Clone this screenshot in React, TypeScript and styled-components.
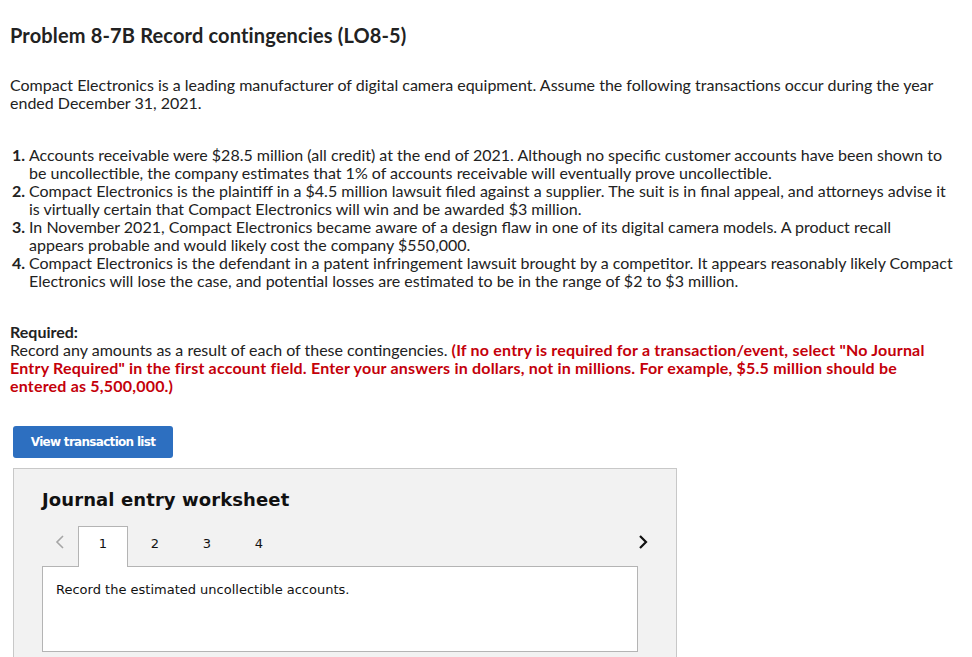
import React from 'react';
import styled, { createGlobalStyle } from 'styled-components';

const GlobalStyle = createGlobalStyle`
  html, body {
    margin: 0;
    padding: 0;
    background: #fff;
  }
  body {
    font-family: 'Lato', 'Liberation Sans', sans-serif;
    color: #222;
  }
`;

const Page = styled.div`
  padding: 22px 0 0 10px;
  width: 943px;
`;

const Title = styled.h1`
  margin: 0;
  font-size: 20px;
  line-height: 26px;
  font-weight: 700;
  letter-spacing: 0.15px;
  color: #222;
`;

const Intro = styled.p`
  margin: 28px 0 0 0;
  font-size: 16px;
  line-height: 18px;
`;

const List = styled.ol`
  margin: 34px 0 0 0;
  padding: 0 0 0 19px;
  font-size: 16px;
  line-height: 18px;
  li::marker {
    font-weight: 700;
  }
`;

const Required = styled.div`
  margin-top: 33px;
  font-size: 16px;
  line-height: 18px;
`;

const Label = styled.div`
  font-weight: 700;
`;

const Warning = styled.strong`
  color: #c4000a;
  letter-spacing: 0.2px;
`;

const ActionButton = styled.button`
  margin: 31px 0 0 3px;
  width: 160px;
  height: 32px;
  border: none;
  border-radius: 3px;
  background: #2d6fc0;
  color: #fff;
  font-family: 'DejaVu Sans', Verdana, sans-serif;
  font-weight: 700;
  font-size: 12px;
  letter-spacing: -0.7px;
  cursor: pointer;
`;

const Worksheet = styled.div`
  margin: 10px 0 0 3px;
  width: 664px;
  height: 200px;
  background: #f2f2f2;
  border: 1px solid #c8c8c8;
  padding: 18px 0 0 28px;
  box-sizing: border-box;
  font-family: 'DejaVu Sans', Verdana, sans-serif;
`;

const WorksheetTitle = styled.h2`
  margin: 0;
  font-size: 18px;
  line-height: 26px;
  font-weight: 700;
  color: #111;
  letter-spacing: 0.1px;
`;

const TabRow = styled.div`
  display: flex;
  align-items: flex-end;
  margin-top: 13px;
  width: 619px;
  height: 40px;
`;

const Arrow = styled.button<{ $dim?: boolean }>`
  border: none;
  background: none;
  padding: 0;
  width: 36px;
  height: 32px;
  display: flex;
  align-items: center;
  justify-content: center;
  color: ${(p) => (p.$dim ? '#a6a6a6' : '#111')};
  align-self: flex-start;
`;

const Tab = styled.div<{ $active?: boolean }>`
  width: 50px;
  height: 41px;
  box-sizing: border-box;
  display: flex;
  justify-content: center;
  padding-top: 9px;
  font-size: 13px;
  color: #111;
  margin-right: 2px;
  margin-bottom: -1px;
  background: ${(p) => (p.$active ? '#fff' : 'transparent')};
  border: 1px solid ${(p) => (p.$active ? '#b4b4b4' : 'transparent')};
  border-bottom: none;
  position: relative;
  z-index: 1;
`;

const Spacer = styled.div`
  flex: 1;
`;

const Panel = styled.div`
  width: 596px;
  height: 86px;
  box-sizing: border-box;
  background: #fff;
  border: 1px solid #b4b4b4;
  padding: 14px 13px;
  font-size: 13px;
  line-height: 18px;
  color: #111;
`;

const Chevron = ({ dir }: { dir: 'left' | 'right' }) => (
  <svg width="10" height="16" viewBox="0 0 10 16">
    <path
      d={dir === 'left' ? 'M8 2 L2 8 L8 14' : 'M2 2 L8 8 L2 14'}
      fill="none"
      stroke="currentColor"
      strokeWidth={dir === 'left' ? 1.6 : 2.2}
    />
  </svg>
);

const items: React.ReactNode[] = [
  'Accounts receivable were $28.5 million (all credit) at the end of 2021. Although no specific customer accounts have been shown to be uncollectible, the company estimates that 1% of accounts receivable will eventually prove uncollectible.',
  'Compact Electronics is the plaintiff in a $4.5 million lawsuit filed against a supplier. The suit is in final appeal, and attorneys advise it is virtually certain that Compact Electronics will win and be awarded $3 million.',
  <>
    In November 2021, Compact Electronics became aware of a design flaw in one of its digital camera models. A product recall
    <br />
    appears probable and would likely cost the company $550,000.
  </>,
  'Compact Electronics is the defendant in a patent infringement lawsuit brought by a competitor. It appears reasonably likely Compact Electronics will lose the case, and potential losses are estimated to be in the range of $2 to $3 million.',
];

export default function App() {
  return (
    <>
      <GlobalStyle />
      <Page>
        <Title>Problem 8-7B Record contingencies (LO8-5)</Title>
        <Intro>
          Compact Electronics is a leading manufacturer of digital camera equipment. Assume the following transactions occur
          during the year ended December 31, 2021.
        </Intro>
        <List>
          {items.map((text, i) => (
            <li key={i}>{text}</li>
          ))}
        </List>
        <Required>
          <Label>Required:</Label>
          Record any amounts as a result of each of these contingencies.{' '}
          <Warning>
            (If no entry is required for a transaction/event, select "No Journal Entry Required" in the first account
            field. Enter your answers in dollars, not in millions. For example, $5.5 million should be entered as
            5,500,000.)
          </Warning>
        </Required>
        <ActionButton>View transaction list</ActionButton>
        <Worksheet>
          <WorksheetTitle>Journal entry worksheet</WorksheetTitle>
          <TabRow>
            <Arrow $dim>
              <Chevron dir="left" />
            </Arrow>
            {[1, 2, 3, 4].map((n) => (
              <Tab key={n} $active={n === 1}>
                {n}
              </Tab>
            ))}
            <Spacer />
            <Arrow>
              <Chevron dir="right" />
            </Arrow>
          </TabRow>
          <Panel>Record the estimated uncollectible accounts.</Panel>
        </Worksheet>
      </Page>
    </>
  );
}
